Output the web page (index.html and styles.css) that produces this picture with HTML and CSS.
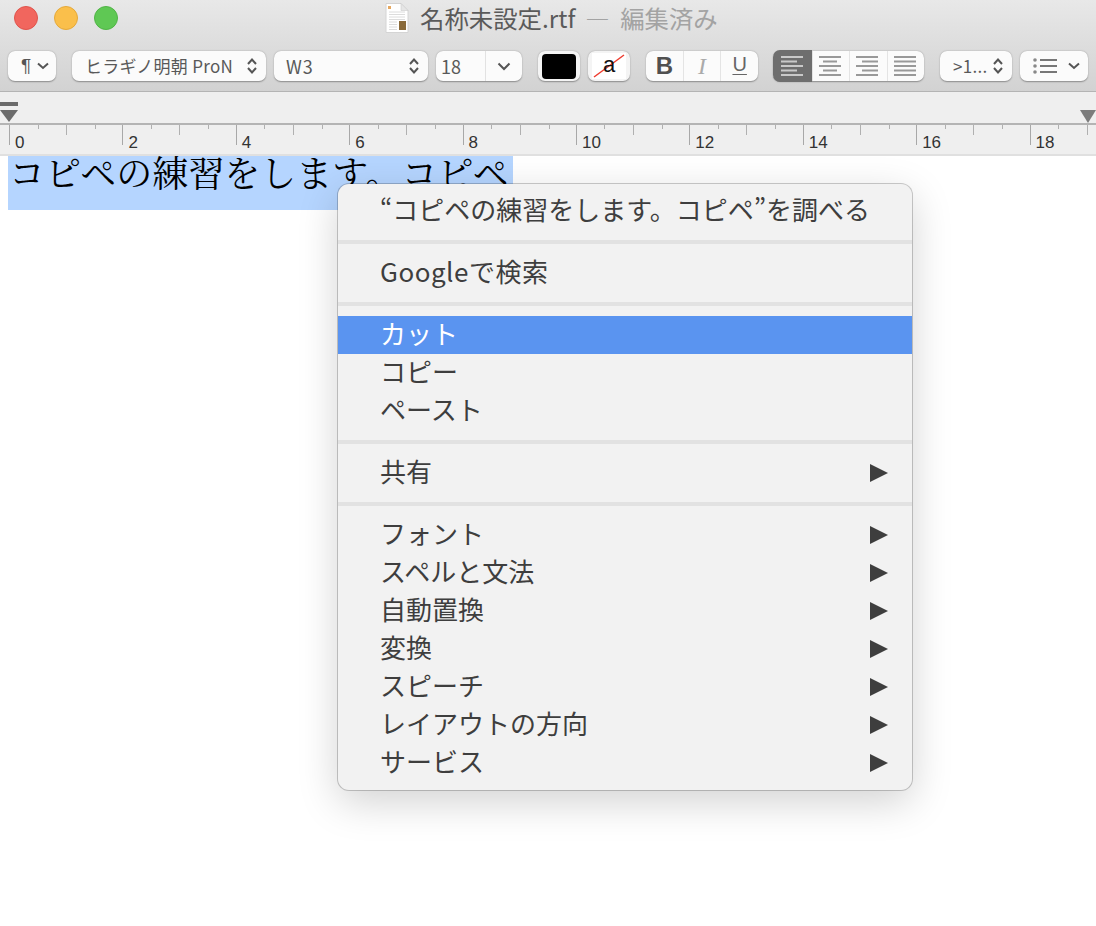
FILE: index.html
```html
<!DOCTYPE html>
<html lang="ja">
<head>
  <meta charset="UTF-8" />
  <meta name="viewport" content="width=device-width, initial-scale=1.0" />
  <title>名称未設定.rtf</title>
  <link rel="stylesheet" href="styles.css">
</head>
<body>
  <header class="window-top">
    <div class="titlebar">
      <div class="lights">
        <span class="light red"></span>
        <span class="light yellow"></span>
        <span class="light green"></span>
      </div>
      <div class="title">
        <svg class="doc-icon" width="24" height="30" viewBox="0 0 24 30">
          <path d="M1 0.500H16L23 7.500V29.500H1Z" fill="#fff" stroke="#d4d4d4" stroke-width="1"/>
          <path d="M16 0.500V7.500H23Z" fill="#e6e6e6" stroke="#cccccc" stroke-width="0.6"/>
          <rect x="3" y="3" width="3" height="3" fill="#e6a860"/>
          <path d="M4 9H20M4 11.500H20M4 14H20M4 16.500H20M4 19H12M4 21.500H12M4 24H12M4 26.500H12" stroke="#dcdcdc" stroke-width="1"/>
          <rect x="14" y="18" width="7" height="9" fill="#8a6a3a"/>
        </svg>
        <span class="title-name">名称未設定.rtf</span>
        <span class="title-state">— 編集済み</span>
      </div>
    </div>

    <div class="toolbar">
      <div class="btn w-para">
        <span class="para-mark">¶</span>
        <svg class="chev" width="12" height="8" viewBox="0 0 12 8"><path d="M1 1.500L6 6L11 1.500" /></svg>
      </div>
      <div class="btn w-font wide-gap">
        <span class="btn-label">ヒラギノ明朝 ProN</span>
        <svg class="updown" width="12" height="18" viewBox="0 0 12 18"><path d="M2 7L6 2.500L10 7M2 11L6 15.500L10 11" /></svg>
      </div>
      <div class="btn w-style">
        <span class="btn-label style-label">W3</span>
        <svg class="updown" width="12" height="18" viewBox="0 0 12 18"><path d="M2 7L6 2.500L10 7M2 11L6 15.500L10 11" /></svg>
      </div>
      <div class="btn w-size">
        <span class="size-value">18</span>
        <span class="size-arrow">
          <svg class="chev" width="14" height="9" viewBox="0 0 14 9"><path d="M1.500 1.500L7 7L12.500 1.500" /></svg>
        </span>
      </div>
      <div class="btn w-swatch wide-gap">
        <span class="swatch"></span>
      </div>
      <div class="btn w-swatch">
        <svg class="no-bg" width="34" height="26" viewBox="0 0 34 26">
          <path d="M2 24L32 2" stroke="#ee3b2e" stroke-width="1.500"/>
          <text x="17" y="19" class="no-bg-letter" text-anchor="middle">a</text>
        </svg>
      </div>
      <div class="segments w-biu wide-gap">
        <span class="seg bold">B</span>
        <span class="seg italic">I</span>
        <span class="seg under">U</span>
      </div>
      <div class="segments w-align align-group">
        <span class="seg active">
          <svg width="22" height="20" viewBox="0 0 22 20"><path d="M0 1H22M0 5.500H16M0 10H22M0 14.500H16M0 19H22" /></svg>
        </span>
        <span class="seg">
          <svg width="22" height="20" viewBox="0 0 22 20"><path d="M0 1H22M4 5.500H18M0 10H22M4 14.500H18M0 19H22" /></svg>
        </span>
        <span class="seg">
          <svg width="22" height="20" viewBox="0 0 22 20"><path d="M0 1H22M6 5.500H22M0 10H22M6 14.500H22M0 19H22" /></svg>
        </span>
        <span class="seg">
          <svg width="22" height="20" viewBox="0 0 22 20"><path d="M0 1H22M0 5.500H22M0 10H22M0 14.500H22M0 19H22" /></svg>
        </span>
      </div>
      <div class="btn w-spacing wide-gap">
        <span class="btn-label">&gt;1...</span>
        <svg class="updown" width="12" height="18" viewBox="0 0 12 18"><path d="M2 7L6 2.500L10 7M2 11L6 15.500L10 11" /></svg>
      </div>
      <div class="btn w-list">
        <svg class="list-icon" width="24" height="18" viewBox="0 0 24 18">
          <path d="M7 3H24M7 9H24M7 15H24" />
          <circle cx="2" cy="3" r="1.800"/><circle cx="2" cy="9" r="1.800"/><circle cx="2" cy="15" r="1.800"/>
        </svg>
        <svg class="chev" width="12" height="8" viewBox="0 0 12 8"><path d="M1 1.500L6 6L11 1.500" /></svg>
      </div>
    </div>
  </header>

  <div class="ruler">
    <span class="marker-first"></span>
    <span class="marker-tab"></span>
    <span class="marker-right"></span>
    <div class="ruler-scale">
      <div class="ruler-cell">0</div>
      <div class="ruler-cell">2</div>
      <div class="ruler-cell">4</div>
      <div class="ruler-cell">6</div>
      <div class="ruler-cell">8</div>
      <div class="ruler-cell">10</div>
      <div class="ruler-cell">12</div>
      <div class="ruler-cell">14</div>
      <div class="ruler-cell">16</div>
      <div class="ruler-cell">18</div>
    </div>
  </div>

  <main class="document">
    <span class="selected-text">コピペの練習をします。コピペ</span>
  </main>

  <div class="context-menu">
    <div class="menu-item">“コピペの練習をします。コピペ”を調べる</div>
    <div class="menu-sep"></div>
    <div class="menu-item wide-latin">Googleで検索</div>
    <div class="menu-sep"></div>
    <div class="menu-item selected">カット</div>
    <div class="menu-item">コピー</div>
    <div class="menu-item">ペースト</div>
    <div class="menu-sep"></div>
    <div class="menu-item has-sub">共有</div>
    <div class="menu-sep"></div>
    <div class="menu-item has-sub">フォント</div>
    <div class="menu-item has-sub">スペルと文法</div>
    <div class="menu-item has-sub">自動置換</div>
    <div class="menu-item has-sub">変換</div>
    <div class="menu-item has-sub">スピーチ</div>
    <div class="menu-item has-sub">レイアウトの方向</div>
    <div class="menu-item has-sub">サービス</div>
  </div>
</body>
</html>
```

FILE: styles.css
```css
* {
  margin: 0;
  padding: 0;
  box-sizing: border-box;
}
body {
  position: relative;
  height: 926px;
  overflow: hidden;
  background-color: #fff;
  font-family: 'Noto Sans CJK JP', 'Liberation Sans', sans-serif;
}

/* title bar + toolbar */
.window-top {
  height: 92px;
  background: linear-gradient(#e8e8e8, #d2d2d2);
  border-bottom: 1px solid #b4b4b4;
}
.titlebar {
  position: relative;
  height: 51px;
  padding: 6px 0 0 14px;
}
.lights {
  display: flex;
  gap: 16px;
}
.light {
  width: 24px;
  height: 24px;
  border-radius: 50%;
}
.red { background-color: #f1665e; border: 1px solid #e0544c; }
.yellow { background-color: #fabf4b; border: 1px solid #e5a93a; }
.green { background-color: #5fc854; border: 1px solid #50b446; }
.title {
  position: absolute;
  left: 385px;
  top: 0;
  display: flex;
  align-items: center;
  height: 36px;
  font-size: 24.400px;
  line-height: 36px;
  white-space: nowrap;
}
.doc-icon { margin-right: 11px; }
.title-name { color: #5a5a5a; margin-right: 10px; }
.title-state { color: #a3a3a3; word-spacing: 5px; }

.toolbar {
  display: flex;
  gap: 8px;
  padding: 0 8px;
  height: 30px;
}
.wide-gap { margin-left: 8px; }
.align-group { margin-left: 7px; }
.btn, .segments {
  display: flex;
  align-items: center;
  height: 30px;
  background-color: #fbfbfb;
  border-radius: 7px;
  box-shadow: 0 0.5px 1.5px rgba(0, 0, 0, 0.35);
  color: #595959;
}
.btn {
  justify-content: space-between;
  padding: 0 8px 0 13px;
}
.btn-label {
  font-size: 17px;
  letter-spacing: 0.300px;
  line-height: 28px;
  white-space: nowrap;
}
.style-label {
  font-size: 18px;
  letter-spacing: 1px;
  margin-left: -1px;
}
.w-para { width: 48px; padding-right: 7px; }
.w-font { width: 194px; }
.w-style { width: 154px; }
.w-size { width: 86px; padding: 0; }
.w-swatch { width: 42px; justify-content: center; padding: 0; background-color: #f4f4f4; }
.w-biu { width: 112px; }
.w-align { width: 151px; }
.w-spacing { width: 72px; }
.w-list { width: 68px; }
.para-mark {
  font-family: 'Liberation Sans', sans-serif;
  font-size: 19px;
  color: #555;
}
.chev, .updown {
  fill: none;
  stroke: #555;
  stroke-width: 2;
  flex-shrink: 0;
}
.size-value {
  flex: 1;
  padding-left: 5px;
  font-size: 18px;
  line-height: 26px;
}
.size-arrow {
  display: flex;
  align-items: center;
  justify-content: center;
  width: 37px;
  height: 30px;
  border-left: 1px solid #e2e2e2;
}
.swatch {
  width: 34px;
  height: 25px;
  background-color: #000;
  border-radius: 4px;
}
.no-bg {
  background-color: #fff;
}
.no-bg-letter {
  font-family: 'Liberation Sans', sans-serif;
  font-size: 22px;
  fill: #111;
}
.seg {
  display: flex;
  flex: 1;
  align-items: center;
  justify-content: center;
  height: 100%;
  border-left: 1px solid #e4e4e4;
}
.seg:first-child { border-left: none; }
.seg svg {
  margin-right: 2px;
}
.seg svg path {
  stroke: #999;
  stroke-width: 2;
}
.seg.active {
  flex: 0 0 39px;
  height: 32px;
  background-color: #6e6e6e;
  border-radius: 7px 0 0 7px;
}
.seg.active svg path { stroke: #c9c9c9; }
.bold {
  font-family: 'Liberation Sans', sans-serif;
  font-size: 24px;
  font-weight: 700;
  color: #505050;
}
.italic {
  font-family: 'Liberation Serif', serif;
  font-size: 24px;
  font-style: italic;
  color: #aaa;
}
.under {
  padding-bottom: 3px;
  font-family: 'Liberation Sans', sans-serif;
  font-size: 20px;
  color: #666;
  text-decoration: underline;
  text-decoration-thickness: 1px;
  text-underline-offset: 3px;
}
.list-icon path {
  stroke: #777;
  stroke-width: 2;
}
.list-icon circle { fill: #888; }

/* ruler */
.ruler {
  position: relative;
  height: 64px;
  background-color: #efefef;
  border-bottom: 2px solid #e0e0e0;
  padding-top: 31px;
}
.ruler-scale {
  display: flex;
  border-top: 2px solid #b4b4b4;
  padding-left: 9px;
}
.ruler-cell {
  flex: 0 0 113.400px;
  height: 20px;
  padding: 8px 0 0 5px;
  border-left: 1px solid #a8a8a8;
  font-family: 'Liberation Sans', sans-serif;
  font-size: 17px;
  line-height: 20px;
  color: #333;
  background-image:
    linear-gradient(#b0b0b0, #b0b0b0),
    linear-gradient(#b0b0b0, #b0b0b0),
    linear-gradient(#b0b0b0, #b0b0b0);
  background-repeat: no-repeat;
  background-size: 1px 4px, 1px 10px, 1px 4px;
  background-position: 27.500px 0, 56px 0, 85px 0;
}
.marker-first {
  position: absolute;
  left: 0;
  top: 10px;
  width: 18px;
  height: 4px;
  background-color: #6b6b6b;
}
.marker-tab {
  position: absolute;
  left: 0;
  top: 18px;
  border-left: 9px solid transparent;
  border-right: 9px solid transparent;
  border-top: 12px solid #6b6b6b;
}
.marker-right {
  position: absolute;
  right: 0;
  top: 18px;
  border-left: 8px solid transparent;
  border-right: 8px solid transparent;
  border-top: 13px solid #7c7c7c;
}

/* document */
.document {
  padding: 0 8px;
  font-family: 'Noto Serif CJK JP', 'Noto Sans CJK JP', serif;
}
.selected-text {
  display: inline-block;
  height: 54px;
  width: 505px;
  padding-left: 1px;
  background-color: #b5d5ff;
  color: #000;
  font-size: 36px;
  line-height: 31px;
  white-space: nowrap;
}

/* context menu */
.context-menu {
  position: absolute;
  left: 338px;
  top: 184px;
  width: 574px;
  height: 606px;
  padding: 8px 0;
  background-color: #f2f2f2;
  border-radius: 11px;
  box-shadow: 0 0 0 1px rgba(0, 0, 0, 0.2), 0 12px 40px rgba(0, 0, 0, 0.18);
}
.menu-item {
  position: relative;
  height: 38px;
  padding-left: 42px;
  font-size: 26px;
  line-height: 33px;
  color: #3e3e3e;
  white-space: nowrap;
}
.wide-latin { letter-spacing: 0.500px; }
.menu-item.selected {
  background-color: #5a94f0;
  color: #fff;
}
.menu-item.has-sub::after {
  content: "";
  position: absolute;
  left: 532px;
  top: 10px;
  border-top: 9.500px solid transparent;
  border-bottom: 9.500px solid transparent;
  border-left: 18px solid #3e3e3e;
}
.menu-sep {
  height: 4px;
  margin: 10px 0;
  background-color: #e2e2e2;
}
```
